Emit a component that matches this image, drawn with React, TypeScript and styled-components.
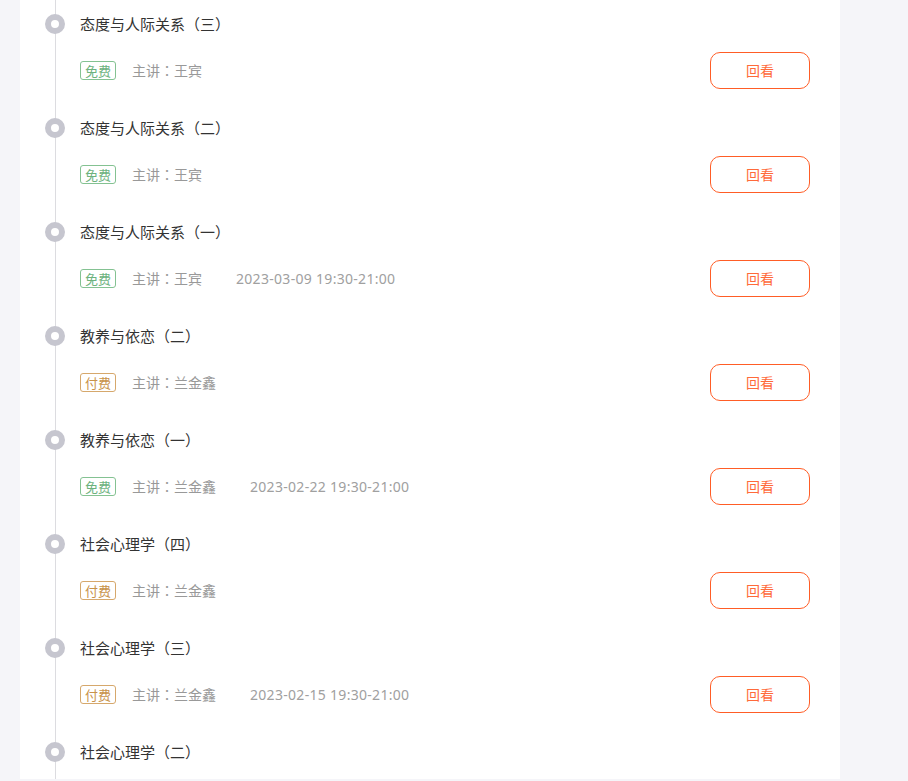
import React from "react";
import styled, { createGlobalStyle } from "styled-components";

const Global = createGlobalStyle`
  html, body { margin: 0; padding: 0; background: #f5f5f9; }
  body { font-family: "Noto Sans CJK SC", "Noto Sans", sans-serif; }
`;

const Page = styled.div`
  padding-left: 20px;
  height: 781px;
  overflow: hidden;
`;

const Panel = styled.div`
  width: 820px;
  height: 779px;
  background: #fff;
  overflow: hidden;
`;

const List = styled.ul`
  position: relative;
  list-style: none;
  margin: 0;
  padding: 0 30px 0 25px;
  &::before {
    content: "";
    position: absolute;
    left: 35px;
    top: 0;
    bottom: 0;
    width: 1px;
    background: #dcdce0;
  }
`;

const Item = styled.li`
  position: relative;
  padding: 14px 0 16px;
  height: 104px;
  box-sizing: border-box;
`;

const TitleRow = styled.div`
  display: flex;
  align-items: center;
  gap: 15px;
  height: 20px;
`;

const Dot = styled.span`
  position: relative;
  width: 20px;
  height: 20px;
  box-sizing: border-box;
  border-radius: 50%;
  border: 6px solid #c6c6cf;
  background: #fff;
  flex: none;
`;

const Title = styled.span`
  font-family: "Noto Sans CJK SC", sans-serif;
  font-size: 15px;
  color: #333;
  line-height: 20px;
`;

const InfoRow = styled.div`
  display: flex;
  align-items: center;
  height: 36px;
  margin-top: 18px;
  padding-left: 35px;
`;

const Tag = styled.span<{ $paid: boolean }>`
  display: inline-flex;
  align-items: center;
  justify-content: center;
  height: 19px;
  width: 36px;
  box-sizing: border-box;
  border: 1px solid ${(p) => (p.$paid ? "#d6a86c" : "#84c292")};
  color: ${(p) => (p.$paid ? "#c8924a" : "#6db27e")};
  border-radius: 3px;
  font-size: 13px;
  line-height: 1;
`;

const Lecturer = styled.span`
  font-family: "Noto Sans CJK TC", "Noto Sans CJK SC", sans-serif;
  margin-left: 16px;
  font-size: 14px;
  color: #999;
`;

const Time = styled.span`
  font-family: "Noto Sans", "Noto Sans CJK SC", sans-serif;
  letter-spacing: 0.3px;
  margin-left: 34px;
  font-size: 14px;
  color: #a0a0a0;
`;

const Replay = styled.button`
  margin-left: auto;
  width: 100px;
  height: 37px;
  box-sizing: border-box;
  border: 1px solid #ff5d26;
  border-radius: 10px;
  background: #fff;
  color: #ff6a3a;
  font-family: inherit;
  font-size: 14px;
  cursor: pointer;
`;

type Lesson = { title: string; paid: boolean; teacher: string; time?: string };

const lessons: Lesson[] = [
  { title: "态度与人际关系（三）", paid: false, teacher: "王宾" },
  { title: "态度与人际关系（二）", paid: false, teacher: "王宾" },
  { title: "态度与人际关系（一）", paid: false, teacher: "王宾", time: "2023-03-09 19:30-21:00" },
  { title: "教养与依恋（二）", paid: true, teacher: "兰金鑫" },
  { title: "教养与依恋（一）", paid: false, teacher: "兰金鑫", time: "2023-02-22 19:30-21:00" },
  { title: "社会心理学（四）", paid: true, teacher: "兰金鑫" },
  { title: "社会心理学（三）", paid: true, teacher: "兰金鑫", time: "2023-02-15 19:30-21:00" },
  { title: "社会心理学（二）", paid: true, teacher: "兰金鑫" },
];

export default function App() {
  return (
    <>
      <Global />
      <Page>
        <Panel>
          <List>
            {lessons.map((l, i) => (
              <Item key={i}>
                <TitleRow>
                  <Dot />
                  <Title>{l.title}</Title>
                </TitleRow>
                <InfoRow>
                  <Tag $paid={l.paid}>{l.paid ? "付费" : "免费"}</Tag>
                  <Lecturer>主讲：{l.teacher}</Lecturer>
                  {l.time && <Time>{l.time}</Time>}
                  <Replay>回看</Replay>
                </InfoRow>
              </Item>
            ))}
          </List>
        </Panel>
      </Page>
    </>
  );
}
